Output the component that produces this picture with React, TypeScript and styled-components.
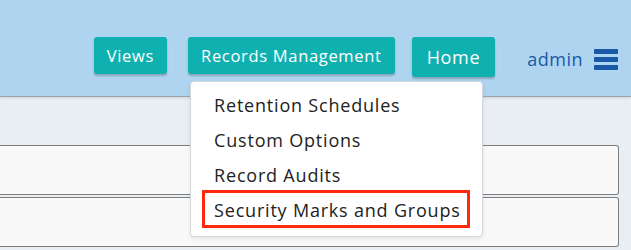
import styled, { createGlobalStyle } from "styled-components";

const GlobalStyle = createGlobalStyle`
  html, body {
    margin: 0;
    padding: 0;
    background: #e9eef2;
    font-family: "Open Sans", "Liberation Sans", sans-serif;
    overflow: hidden;
  }
`;

const menuItems = [
  "Retention Schedules",
  "Custom Options",
  "Record Audits",
  "Security Marks and Groups",
];

const App = () => {
  return (
    <>
      <GlobalStyle />
      <Page>
        <Header>
          <Nav>
            <NavButton>Views</NavButton>
            <MenuWrap>
              <NavButton>Records Management</NavButton>
              <Dropdown>
                {menuItems.map((item, i) => (
                  <MenuItem key={item}>
                    <ItemLabel $marked={i === menuItems.length - 1}>{item}</ItemLabel>
                  </MenuItem>
                ))}
              </Dropdown>
            </MenuWrap>
            <NavButton $large>Home</NavButton>
            <UserArea>
              <UserName>admin</UserName>
              <Burger>
                <span />
                <span />
                <span />
              </Burger>
            </UserArea>
          </Nav>
        </Header>
        <Content>
          <Card />
          <Card />
        </Content>
      </Page>
    </>
  );
};

const Page = styled.div`
  width: 631px;
  height: 250px;
  display: flex;
  flex-direction: column;
`;

const Header = styled.header`
  height: 97px;
  background: #aed4ef;
  border-bottom: 1px solid #9aa3ab;
  box-shadow: 0 1px 3px rgba(0, 0, 0, 0.12);
  position: relative;
  z-index: 2;
  display: flex;
  justify-content: flex-end;
  align-items: flex-start;
  padding: 37px 13px 0 0;
  box-sizing: border-box;
`;

const Nav = styled.nav`
  display: flex;
  align-items: flex-start;
`;

const NavButton = styled.button<{ $large?: boolean }>`
  height: ${(p) => (p.$large ? "40px" : "37px")};
  padding: 0 ${(p) => (p.$large ? "15px" : "13px")};
  border: none;
  border-radius: 3px;
  background: #0fb1b0;
  color: #fff;
  font-family: inherit;
  font-size: ${(p) => (p.$large ? "18px" : "16.5px")};
  letter-spacing: 0.68px;
  box-shadow: 0 2px 2px rgba(0, 0, 0, 0.22);
  margin-right: ${(p) => (p.$large ? "32px" : "21px")};
  cursor: pointer;
`;

const MenuWrap = styled.div`
  position: relative;
  margin-right: -4px;
`;

const Dropdown = styled.div`
  position: absolute;
  top: 44px;
  left: 2px;
  width: 293px;
  height: 156px;
  box-sizing: border-box;
  background: #fff;
  border: 1px solid #d3d6da;
  border-radius: 4px;
  box-shadow: 0 2px 4px rgba(0, 0, 0, 0.08);
  padding: 5px 0 0 23px;
`;

const MenuItem = styled.div`
  height: 35px;
  display: flex;
  align-items: center;
  font-size: 18px;
  letter-spacing: 0.8px;
  color: #222;
`;

const ItemLabel = styled.span<{ $marked?: boolean }>`
  position: relative;
  &::after {
    content: "";
    display: ${(p) => (p.$marked ? "block" : "none")};
    position: absolute;
    left: -12px;
    right: -9px;
    top: -8px;
    bottom: -6px;
    border: 3px solid #ff2a0e;
  }
`;

const UserArea = styled.div`
  display: flex;
  align-items: center;
  gap: 11px;
  margin-top: 10px;
`;

const UserName = styled.span`
  font-size: 18px;
  letter-spacing: 0.5px;
  color: #1a58a8;
`;

const Burger = styled.div`
  width: 24px;
  display: flex;
  flex-direction: column;
  gap: 3px;
  span {
    height: 5px;
    border-radius: 1px;
    background: #1a58a8;
  }
`;

const Content = styled.main`
  flex: 1;
  padding: 48px 12px 0 0;
  display: flex;
  flex-direction: column;
  gap: 2px;
`;

const Card = styled.div`
  height: 50px;
  box-sizing: border-box;
  background: #f9f9f9;
  border: 1px solid #7d7d7d;
  border-left: none;
  border-radius: 0 3px 3px 0;
`;

export default App;
